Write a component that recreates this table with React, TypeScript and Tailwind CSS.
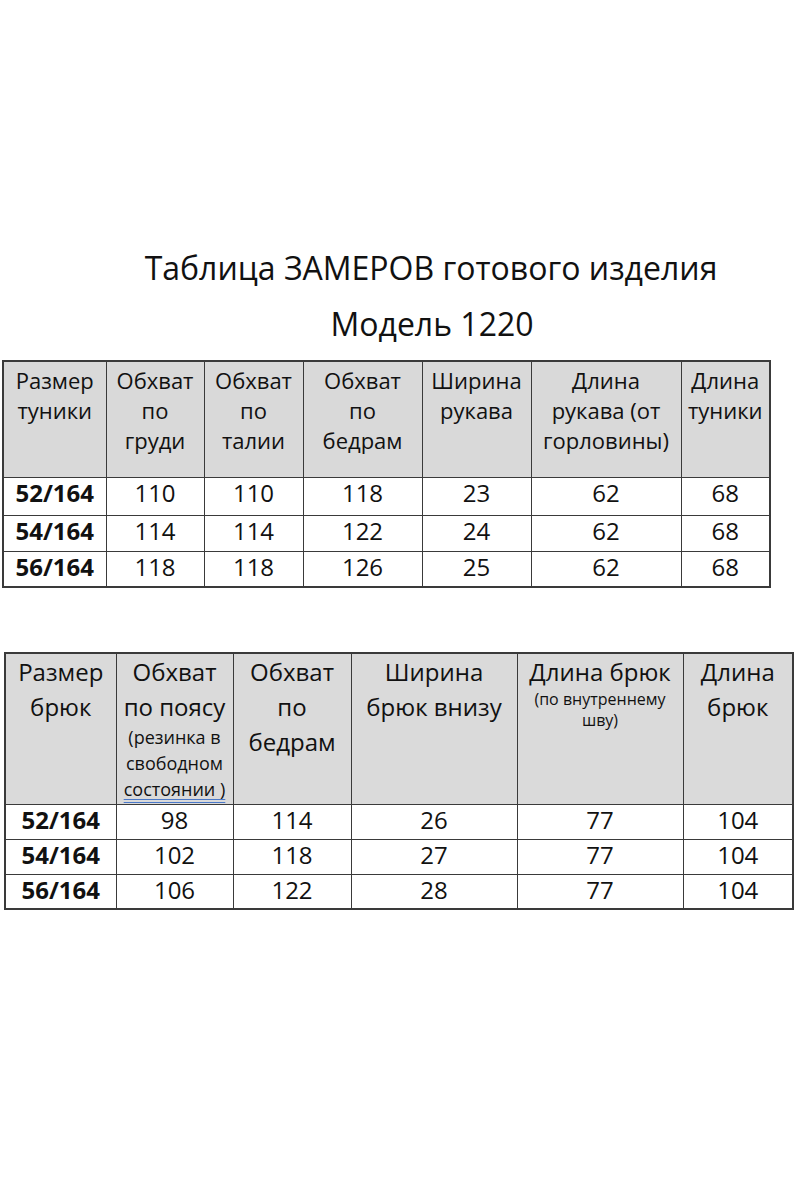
const font = { fontFamily: '"Open Sans", "Noto Sans", sans-serif' };

const tunicRows = [
  ["52/164", "110", "110", "118", "23", "62", "68"],
  ["54/164", "114", "114", "122", "24", "62", "68"],
  ["56/164", "118", "118", "126", "25", "62", "68"],
];

const pantsRows = [
  ["52/164", "98", "114", "26", "77", "104"],
  ["54/164", "102", "118", "27", "77", "104"],
  ["56/164", "106", "122", "28", "77", "104"],
];

const cell = "border border-[#3a3a3a] text-center align-top";

export default function App() {
  return (
    <div className="min-h-[1200px] w-[800px] bg-white text-[#111]" style={font}>
      <div className="flex flex-col items-center pt-[250px]">
        <h1 className="ml-[62px] text-[32px] leading-[36px]">Таблица ЗАМЕРОВ готового изделия</h1>
        <h2 className="mt-[20px] ml-[64px] text-[32px] leading-[36px]">Модель 1220</h2>
      </div>

      <table className="mt-[18px] ml-[2px] w-[767px] table-fixed border-collapse border-2 border-[#3a3a3a]">
        <colgroup>
          <col className="w-[103px]" />
          <col className="w-[98px]" />
          <col className="w-[99px]" />
          <col className="w-[119px]" />
          <col className="w-[109px]" />
          <col className="w-[150px]" />
          <col className="w-[89px]" />
        </colgroup>
        <thead>
          <tr className="h-[116px] bg-[#d9d9d9] text-[22px] leading-[30px]">
            <th className={`${cell} pt-[3px] font-normal`}>Размер<br />туники</th>
            <th className={`${cell} pt-[3px] font-normal`}>Обхват<br />по<br />груди</th>
            <th className={`${cell} pt-[3px] font-normal`}>Обхват<br />по<br />талии</th>
            <th className={`${cell} pt-[3px] font-normal`}>Обхват<br />по<br />бедрам</th>
            <th className={`${cell} pt-[3px] font-normal`}>Ширина<br />рукава</th>
            <th className={`${cell} pt-[3px] font-normal`}>Длина<br />рукава (от<br />горловины)</th>
            <th className={`${cell} pt-[3px] font-normal`}>Длина<br />туники</th>
          </tr>
        </thead>
        <tbody className="text-[24px] leading-[30px]">
          {tunicRows.map((r, i) => (
            <tr key={r[0]} className={i === 0 ? "h-[38px]" : "h-[36px]"}>
              {r.map((v, j) => (
                <td key={j} className={`${cell} align-middle ${j === 0 ? "font-bold" : ""}`}>
                  {v}
                </td>
              ))}
            </tr>
          ))}
        </tbody>
      </table>

      <table className="mt-[64px] ml-[4px] w-[788px] table-fixed border-collapse border-2 border-[#3a3a3a]">
        <colgroup>
          <col className="w-[111px]" />
          <col className="w-[117px]" />
          <col className="w-[118px]" />
          <col className="w-[166px]" />
          <col className="w-[166px]" />
          <col className="w-[110px]" />
        </colgroup>
        <thead>
          <tr className="h-[151px] bg-[#dadada] text-[24px] leading-[35px]">
            <th className={`${cell} font-normal`}>Размер<br />брюк</th>
            <th className={`${cell} font-normal`}>
              Обхват<br />по поясу
              <div className="text-[18px] leading-[26px]">
                (резинка в<br />свободном<br />
                <span className="underline decoration-double decoration-[#4a78c8] underline-offset-[3px]">состоянии )</span>
              </div>
            </th>
            <th className={`${cell} font-normal`}>Обхват<br />по<br />бедрам</th>
            <th className={`${cell} font-normal`}>Ширина<br />брюк внизу</th>
            <th className={`${cell} font-normal`}>
              Длина брюк
              <div className="text-[16px] leading-[21px]">(по внутреннему<br />шву)</div>
            </th>
            <th className={`${cell} font-normal`}>Длина<br />брюк</th>
          </tr>
        </thead>
        <tbody className="text-[24px] leading-[30px]">
          {pantsRows.map((r) => (
            <tr key={r[0]} className="h-[35px]">
              {r.map((v, j) => (
                <td key={j} className={`${cell} align-middle ${j === 0 ? "font-bold" : ""}`}>
                  {v}
                </td>
              ))}
            </tr>
          ))}
        </tbody>
      </table>
    </div>
  );
}
